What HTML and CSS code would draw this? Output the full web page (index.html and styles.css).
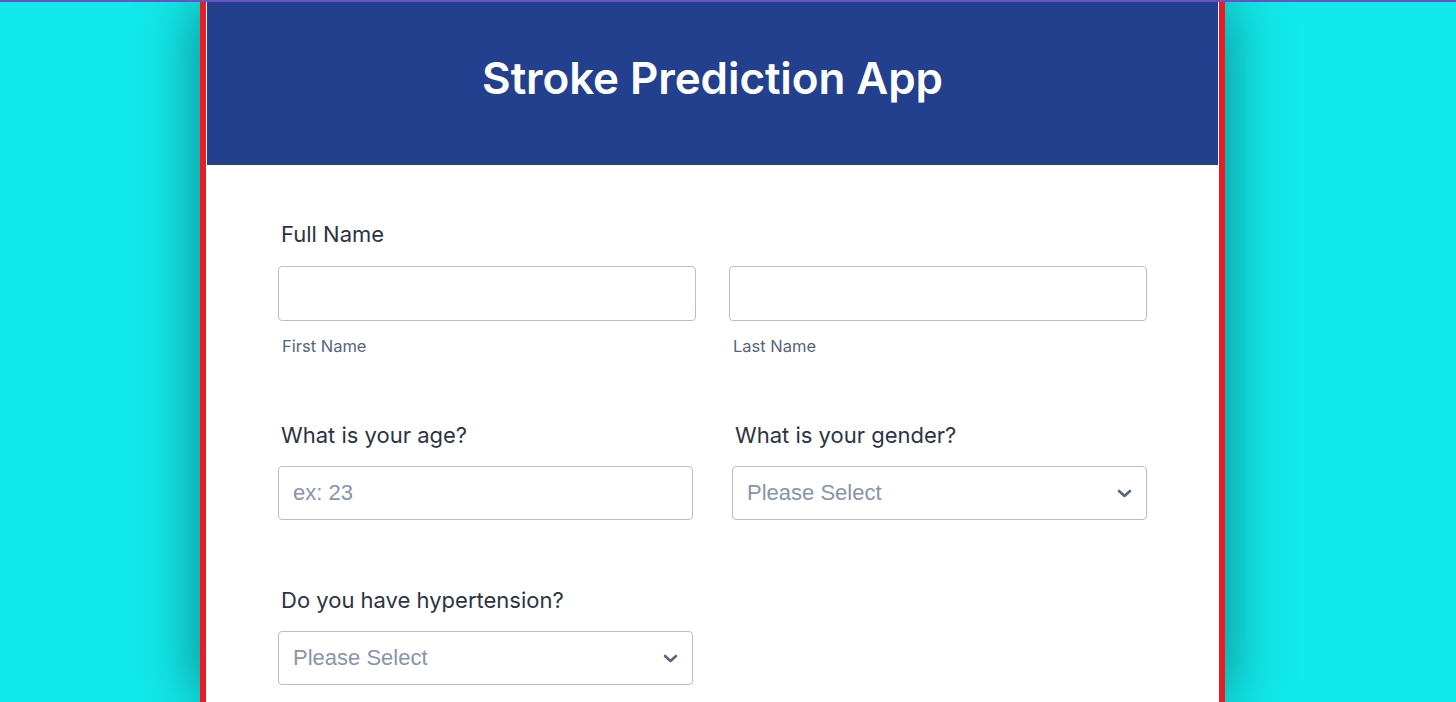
FILE: index.html
```html
<!DOCTYPE html>
<html lang="en">
<head>
<meta charset="utf-8">
<title>Stroke Prediction App</title>
<link rel="stylesheet" href="styles.css">
</head>
<body>
<div class="topbar"></div>
<div class="page">
  <div class="card">
    <header class="card-header">
      <h1 class="title">Stroke Prediction App</h1>
    </header>
    <form class="form">
      <div class="field field-name">
        <label class="label">Full Name</label>
        <div class="row row-name">
          <div class="col">
            <input class="input input-name" type="text">
            <span class="sublabel">First Name</span>
          </div>
          <div class="col">
            <input class="input input-name" type="text">
            <span class="sublabel">Last Name</span>
          </div>
        </div>
      </div>
      <div class="row row-pair row-age">
        <div class="field col">
          <label class="label">What is your age?</label>
          <input class="input" type="text" placeholder="ex: 23">
        </div>
        <div class="field col">
          <label class="label">What is your gender?</label>
          <div class="select">
            <span class="placeholder">Please Select</span>
            <svg class="chev" width="15" height="9" viewBox="0 0 15 9"><path d="M2 2 L7.5 7 L13 2" fill="none" stroke="#57647e" stroke-width="2.6" stroke-linecap="round" stroke-linejoin="round"/></svg>
          </div>
        </div>
      </div>
      <div class="row row-pair">
        <div class="field col">
          <label class="label">Do you have hypertension?</label>
          <div class="select">
            <span class="placeholder">Please Select</span>
            <svg class="chev" width="15" height="9" viewBox="0 0 15 9"><path d="M2 2 L7.5 7 L13 2" fill="none" stroke="#57647e" stroke-width="2.6" stroke-linecap="round" stroke-linejoin="round"/></svg>
          </div>
        </div>
        <div class="col"></div>
      </div>
    </form>
  </div>
</div>
</body>
</html>
```
FILE: styles.css
```css
* { box-sizing: border-box; }
html, body { margin: 0; padding: 0; }
body {
  background: #12e9ea;
  font-family: Inter, "Noto Sans", sans-serif;
  height: 702px;
  overflow: hidden;
}
.topbar {
  position: absolute;
  top: 0; left: 0; right: 0;
  height: 2px;
  background: #6a52c2;
  z-index: 5;
}
.page {
  padding-left: 200px;
}
.card {
  width: 1025px;
  background: #fff;
  border-left: 6px solid #ed1c24;
  border-right: 6px solid #ed1c24;
  padding: 0 1px;
  min-height: 702px;
  box-shadow: 0 0 60px rgba(0, 0, 0, 0.45);
}
.card-header {
  background: #23408e;
  height: 165px;
  display: flex;
  align-items: center;
  justify-content: center;
  padding-bottom: 10px;
}
.title {
  margin: 0;
  color: #fff;
  font-size: 44px;
  font-weight: 600;
  letter-spacing: -0.1px;
}
.form {
  padding: 54px 71px 0 71px;
}
.field { display: flex; flex-direction: column; }
.label {
  font-size: 22px;
  line-height: 30px;
  color: #2c3345;
  padding-left: 3px;
  margin-bottom: 16px;
}
.field-name .label { margin-bottom: 17px; }
.row { display: flex; }
.row-name { gap: 33px; }
.row-pair { gap: 39px; }
.col { flex: 1; display: flex; flex-direction: column; }
.input, .select {
  height: 54px;
  border: 1px solid #b8bdc9;
  border-radius: 4px;
  background: #fff;
  font-family: "Liberation Sans", Arial, sans-serif;
  font-size: 22px;
  padding: 0 14px;
  outline: none;
  width: 100%;
}
.input-name { height: 55px; }
.input::placeholder { color: #8894ab; }
.sublabel {
  font-size: 16.5px;
  line-height: 22px;
  color: #57647e;
  margin-top: 14px;
  padding-left: 4px;
}
.field-name { margin-bottom: 63px; }
.row-age { margin-bottom: 65px; }
.select {
  display: flex;
  align-items: center;
  justify-content: space-between;
}
.placeholder { color: #8894ab; }
.chev { margin-right: 0; }
```
